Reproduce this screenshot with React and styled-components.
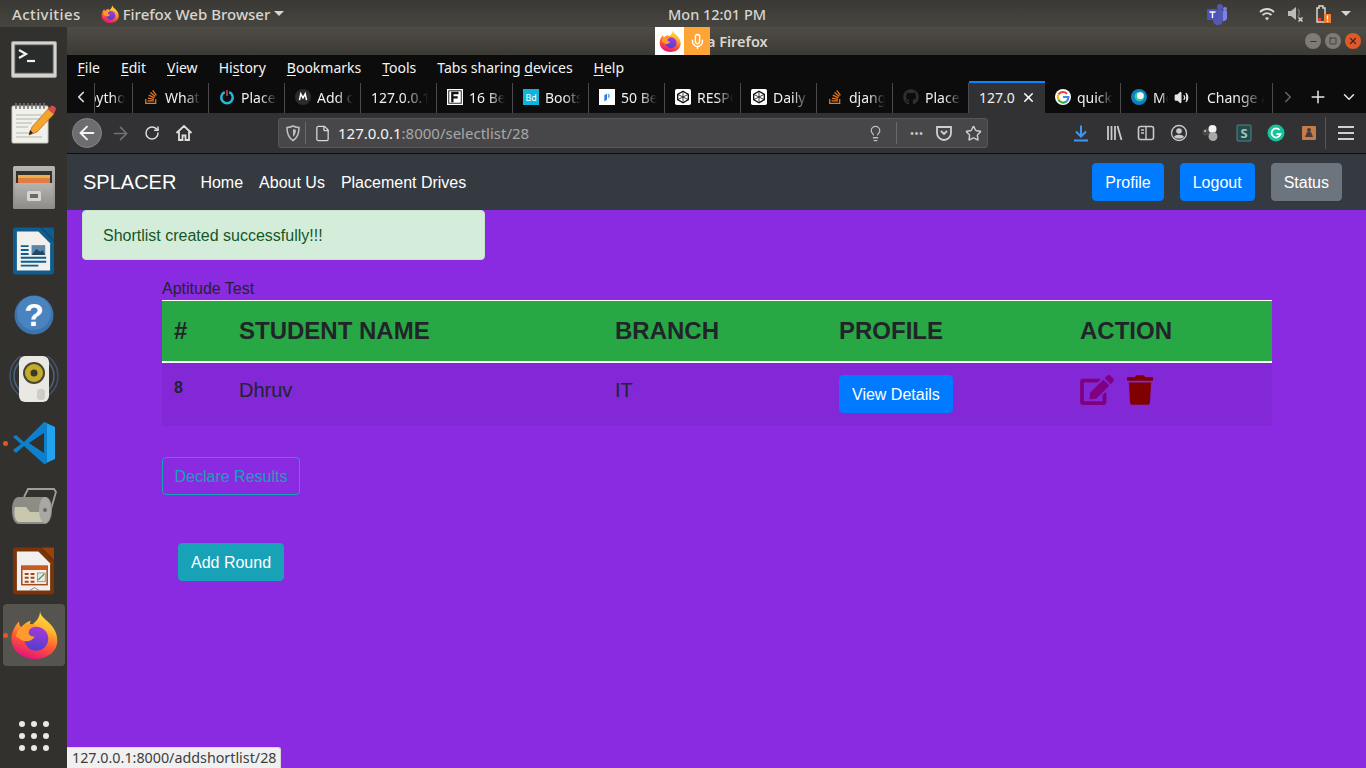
import React, { useId } from 'react';
import styled, { createGlobalStyle } from 'styled-components';
import { FaEdit, FaTrash, FaGithub, FaStackOverflow } from 'react-icons/fa';
import {
  ArrowLeft, ArrowRight, RotateCw, File, Lightbulb, Star,
  X, Plus, ChevronDown, ChevronLeft, ChevronRight, Volume2, Mic, Minus, Square,
} from 'lucide-react';

const GlobalStyle = createGlobalStyle`
  html, body {
    margin: 0;
    height: 100%;
    overflow: hidden;
    background: #8a2be2;
  }
  * { box-sizing: border-box; }
  #root { height: 768px; }
`;

const uiFont = `"Noto Sans", "DejaVu Sans", sans-serif`;
const pageFont = `"Liberation Sans", Arial, sans-serif`;

function FirefoxLogo({ size = 18 }) {
  const id = useId();
  return (
    <svg width={size} height={size} viewBox="0 0 64 64">
      <defs>
        <linearGradient id={`${id}a`} x1="0.75" y1="0" x2="0.4" y2="1">
          <stop offset="0" stopColor="#ffe83f" />
          <stop offset="0.35" stopColor="#ffb52e" />
          <stop offset="0.65" stopColor="#ff5a33" />
          <stop offset="1" stopColor="#e5137b" />
        </linearGradient>
        <linearGradient id={`${id}b`} x1="0.6" y1="0" x2="0.4" y2="1">
          <stop offset="0" stopColor="#a63bd6" />
          <stop offset="1" stopColor="#4f3fd0" />
        </linearGradient>
      </defs>
      <path
        fill={`url(#${id}a)`}
        d="M40 0c0 8 10 12 16 20 6 8 7 14 7 20 0 14-13 24-30 24C16 64 2 52 2 38c0-10 4-18 10-24 0 4 1 6 3 8 3-5 9-8 13-9-2 3-2 5 0 7 6-6 12-10 12-20z"
      />
      <circle cx="35" cy="37" r="16" fill={`url(#${id}b)`} />
      <path
        fill="#ff9a2e"
        d="M8 34c1-9 8-16 17-17 4 0 8 1 11 3-6 0-11 4-11 9 0 3 3 5 8 5-3 6-11 8-17 5-4-2-7-5-8-5z"
      />
    </svg>
  );
}

function TerminalIcon() {
  return (
    <svg width="46" height="37" viewBox="0 0 46 37">
      <rect x="0.500" y="0.500" width="45" height="36" rx="1.500" fill="#d3d3d0" stroke="#9a9a96" />
      <rect x="4" y="4" width="38" height="28" fill="#2a2b2b" stroke="#555" />
      <path d="M8 9l7 4-7 4" fill="none" stroke="#f2f2f2" strokeWidth="2.200" />
      <path d="M16 20h8" stroke="#f2f2f2" strokeWidth="2.200" />
    </svg>
  );
}

function NotepadIcon() {
  return (
    <svg width="46" height="42" viewBox="0 0 46 42">
      <rect x="1" y="4" width="36" height="37" rx="1" fill="#f1f1ec" stroke="#c9c9c2" />
      <path d="M5 1v6M9 1v6M13 1v6M17 1v6M21 1v6M25 1v6M29 1v6M33 1v6" stroke="#777" strokeWidth="1.600" />
      <path d="M5 13h26M5 17h24M5 21h16M5 25h12M5 31h16M5 35h26" stroke="#b5b5b0" strokeWidth="1.200" />
      <path d="M18 33l3-8L37 7l6 5-17 18z" fill="#f5a52f" stroke="#b56f18" strokeWidth="0.800" />
      <path d="M37 7l3-3c2-1 5 1 5 3l-2 5z" fill="#d94b4b" />
      <path d="M18 33l1-5 3 3z" fill="#222" />
    </svg>
  );
}

function CabinetIcon() {
  const id = useId();
  return (
    <svg width="42" height="43" viewBox="0 0 42 43">
      <defs>
        <linearGradient id={id} x1="0" y1="0" x2="0" y2="1">
          <stop offset="0" stopColor="#b5b4b1" />
          <stop offset="1" stopColor="#8d8c89" />
        </linearGradient>
      </defs>
      <rect x="0" y="0" width="42" height="43" rx="1.500" fill={`url(#${id})`} />
      <rect x="3" y="5" width="36" height="13" fill="#33322f" />
      <rect x="5" y="9" width="32" height="3" fill="#eab04a" />
      <rect x="5" y="12" width="32" height="6" fill="#e07c44" />
      <rect x="2" y="17" width="38" height="26" fill={`url(#${id})`} />
      <rect x="14" y="25" width="14" height="10" rx="1.500" fill="#d6d5d2" />
      <rect x="17" y="28" width="8" height="4" fill="#6a6966" />
    </svg>
  );
}

function OfficeIcon({ dark, fold, children }) {
  return (
    <svg width="41" height="48" viewBox="0 0 42 48">
      <path d="M2 0h26l14 14v31a3 3 0 0 1-3 3H3a3 3 0 0 1-3-3V2a2 2 0 0 1 2-2z" fill={dark} />
      <path d="M4 4h22l12 12v28H4z" fill="#f1f0ec" />
      <path d="M29 0h13v13z" fill={fold} />
      {children}
    </svg>
  );
}

function HelpIcon() {
  return (
    <svg width="40" height="40" viewBox="0 0 40 40">
      <circle cx="20" cy="20" r="19.500" fill="#3d74ae" />
      <circle cx="20" cy="18" r="17" fill="#4a84bf" />
      <text x="20" y="31" textAnchor="middle" fontFamily={pageFont} fontSize="32" fontWeight="700" fill="#fff">?</text>
    </svg>
  );
}

function SpeakerIcon() {
  return (
    <svg width="50" height="46" viewBox="0 0 50 46">
      <circle cx="25" cy="20" r="24" fill="none" stroke="#45566b" strokeWidth="1.500" />
      <circle cx="25" cy="20" r="20" fill="none" stroke="#4d6480" strokeWidth="1.500" />
      <rect x="10" y="0" width="30" height="46" rx="6" fill="#e9e8e3" />
      <circle cx="25" cy="17" r="11" fill="#4a4530" />
      <circle cx="25" cy="17" r="9" fill="#c2ac2a" />
      <circle cx="25" cy="17" r="3.500" fill="#3b3826" />
      <rect x="28" y="33" width="8" height="11" rx="3" fill="#cfcdc6" />
    </svg>
  );
}

function VsCodeIcon() {
  return (
    <svg width="42" height="42" viewBox="0 0 42 42">
      <path d="M31 0l11 5v32l-11 5z" fill="#23a2f0" />
      <path d="M31 0L11 20 3 13 0 15l8 7-8 6 3 3 8-7 20 18 3-1V2z" fill="#0d7fcb" />
      <path d="M31 11L16 21l15 10z" fill="#32302c" />
    </svg>
  );
}

function RollerIcon() {
  return (
    <svg width="46" height="38" viewBox="0 0 46 38">
      <path d="M13 9l4-8h26l2 3-7 24" fill="none" stroke="#a09f9a" strokeWidth="1.800" />
      <path d="M8 9h26c5 0 7 6 7 13s-3 14-7 14H8C3 36 1 29 1 22S3 9 8 9z" fill="#8e8d85" />
      <path d="M4 19h11l4 5h17v10H8c-3 0-6-6-4-15z" fill="#c9c8ae" />
      <ellipse cx="34" cy="22" rx="6" ry="13" fill="#a9a8a4" />
      <circle cx="34" cy="22" r="2" fill="#666" />
    </svg>
  );
}

function BarIcon({ children, w = 18, h = 18, vb = '0 0 18 18' }) {
  return <svg width={w} height={h} viewBox={vb}>{children}</svg>;
}

function Favicon({ children }) {
  return <BarIcon w={16} h={16}>{children}</BarIcon>;
}

const teams = (
  <BarIcon w={22} h={22} vb="0 0 22 22">
    <circle cx="14" cy="4" r="3" fill="#5558af" />
    <circle cx="19" cy="6" r="2" fill="#7b83eb" />
    <path d="M16 8h5v7c0 2-2 3-3 3h-2z" fill="#7b83eb" />
    <path d="M7 7h10v10c0 3-2 5-5 5s-5-2-5-5z" fill="#5558af" />
    <rect x="1" y="6" width="11" height="11" rx="1" fill="#4b53bc" />
    <path d="M3.500 9h6M6.500 9v6" stroke="#fff" strokeWidth="1.400" />
  </BarIcon>
);

const wifi = (
  <BarIcon>
    <path d="M2 7c4-4 10-4 14 0M4.500 10c3-2.500 6-2.500 9 0" fill="none" stroke="#d8d7d1" strokeWidth="1.800" />
    <path d="M7 13c1.300-1 2.700-1 4 0l-2 2.500z" fill="#d8d7d1" />
  </BarIcon>
);

const sound = (
  <BarIcon>
    <path d="M2 6h3l5-4v13l-5-4H2z" fill="#bdbcb6" />
    <path d="M12 4c1.500 2 1.500 5 0 8" fill="none" stroke="#77766f" strokeWidth="1.400" />
    <path d="M12.500 12.500l4 4m0-4l-4 4" stroke="#d8d7d1" strokeWidth="1.500" />
  </BarIcon>
);

const battery = (
  <BarIcon w={16} h={20} vb="0 0 16 20">
    <path d="M2 4h2V2h4v2h2v14H2z" fill="none" stroke="#d8d7d1" strokeWidth="1.500" />
    <rect x="3" y="14" width="3" height="3" fill="#d8412e" />
    <rect x="9" y="10" width="7" height="9" fill="#ef7b30" />
    <path d="M12.500 11.500v4M12.500 16.500v1.500" stroke="#fff" strokeWidth="1.300" />
  </BarIcon>
);

const stackIcon = <FaStackOverflow size={16} color="#e87922" />;

const favicons = {
  place: (
    <Favicon>
      <path d="M6.500 3.500a6.500 6.500 0 1 0 5 0" fill="none" stroke="#27b6d8" strokeWidth="2.800" />
      <path d="M9 1v7" stroke="#e8435b" strokeWidth="1.600" />
    </Favicon>
  ),
  medium: (
    <Favicon>
      <circle cx="9" cy="9" r="9" fill="#2b2b2b" />
      <path d="M5 12.500l1.500-7L9 10l2.500-4.500 1.500 7" fill="none" stroke="#fff" strokeWidth="1.700" />
    </Favicon>
  ),
  fonts: (
    <Favicon>
      <rect width="18" height="18" fill="#fff" />
      <rect x="2" y="2" width="14" height="14" fill="none" stroke="#111" strokeWidth="1" />
      <path d="M6 15V4.500h7M6 9.500h6" fill="none" stroke="#111" strokeWidth="2.600" />
    </Favicon>
  ),
  boot: (
    <Favicon>
      <rect width="18" height="18" fill="#0fb4dc" />
      <text x="9" y="13" textAnchor="middle" fontFamily={uiFont} fontSize="10" fill="#fff">Bd</text>
    </Favicon>
  ),
  best: (
    <Favicon>
      <rect width="18" height="18" fill="#fff" />
      <path d="M6 14V7l3-2v7z" fill="#2f7de1" />
      <path d="M10 5c3 .500 3 5 0 5.500z" fill="#5bb3ef" />
    </Favicon>
  ),
  resp: (
    <Favicon>
      <rect width="18" height="18" rx="2" fill="#fff" />
      <path d="M9 2.500L15 6v6l-6 3.500L3 12V6z" fill="none" stroke="#111" strokeWidth="1.500" />
      <path d="M9 2.500V15.500M3 6l12 6M15 6L3 12" stroke="#111" strokeWidth="0.900" />
    </Favicon>
  ),
  google: (
    <Favicon>
      <circle cx="9" cy="9" r="9" fill="#fff" />
      <path d="M13.500 5.500A6 6 0 0 0 4 6" fill="none" stroke="#ea4335" strokeWidth="2.400" />
      <path d="M4 6a6 6 0 0 0 0 6" fill="none" stroke="#fbbc05" strokeWidth="2.400" />
      <path d="M4 12a6 6 0 0 0 9 2" fill="none" stroke="#34a853" strokeWidth="2.400" />
      <path d="M13 14c1.500-1 2-3 2-5H9" fill="none" stroke="#4285f4" strokeWidth="2.400" />
    </Favicon>
  ),
  meet: (
    <Favicon>
      <circle cx="9" cy="9" r="9" fill="#0e7fc0" />
      <circle cx="9.500" cy="8.500" r="5.500" fill="#34c9a8" />
      <circle cx="10.500" cy="7.500" r="3.800" fill="#f1f5f1" />
    </Favicon>
  ),
};

const tabs = [
  { title: 'pytho', width: 39, clip: true },
  { title: 'What is', icon: stackIcon },
  { title: 'Placement', icon: favicons.place },
  { title: 'Add or', icon: favicons.medium },
  { title: '127.0.0.1' },
  { title: '16 Best', icon: favicons.fonts },
  { title: 'Bootstrap', icon: favicons.boot },
  { title: '50 Best', icon: favicons.best },
  { title: 'RESPONSIVE', icon: favicons.resp },
  { title: 'Daily', icon: favicons.resp },
  { title: 'django', icon: stackIcon },
  { title: 'Placement', icon: <FaGithub size={16} color="#2f2f33" /> },
  { title: '127.0', active: true },
  { title: 'quick', icon: favicons.google },
  { title: 'Meet', icon: favicons.meet, audio: true },
  { title: 'Change a' },
];

const dockItems = [
  { icon: <TerminalIcon /> },
  { icon: <NotepadIcon /> },
  { icon: <CabinetIcon /> },
  {
    icon: (
      <OfficeIcon dark="#0f5c8e" fold="#0f5c8e">
        <rect x="19" y="18" width="14" height="10" fill="#5c87a8" />
        <path d="M19 28l5-6 4 3 2-2 3 5z" fill="#26455e" />
        <path d="M8 19h8M8 23h8M8 27h8M8 31h26M8 35h26M8 39h18" stroke="#0f5c8e" strokeWidth="2" />
      </OfficeIcon>
    ),
  },
  { icon: <HelpIcon /> },
  { icon: <SpeakerIcon /> },
  { icon: <VsCodeIcon />, running: true },
  { icon: <RollerIcon /> },
  {
    icon: (
      <OfficeIcon dark="#7a3408" fold="#9a4109">
        <rect x="9" y="19" width="26" height="19" fill="#f6f1ea" stroke="#a4481a" strokeWidth="1.500" />
        <rect x="9" y="19" width="26" height="4" fill="#c85b24" />
        <path d="M12 27h4M12 31h4M12 35h4M18 27h4M18 31h4M18 35h4" stroke="#a4481a" strokeWidth="2" />
        <rect x="25" y="26" width="8" height="9" fill="#e9e9e6" stroke="#777" strokeWidth="0.700" />
        <path d="M26 33l3-3 3-3" fill="none" stroke="#3aa03a" strokeWidth="1.300" />
        <path d="M17 44l5-3 5 3" fill="none" stroke="#888" />
      </OfficeIcon>
    ),
  },
  { icon: <FirefoxLogo size={48} />, running: true, active: true },
];

export default function App() {
  return (
    <>
      <GlobalStyle />
      <Desktop>
        <TopBar>
          <TopLeft>
            <Activities>Activities</Activities>
            <AppMenu>
              <FirefoxLogo size={18} />
              <span>Firefox Web Browser</span>
              <Caret />
            </AppMenu>
          </TopLeft>
          <Clock>Mon 12:01 PM</Clock>
          <TopRight>
            <TrayCell $w={72}>{teams}</TrayCell>
            <TrayCell $w={28}>{wifi}</TrayCell>
            <TrayCell $w={28}>{sound}</TrayCell>
            <TrayCell $w={28}>{battery}</TrayCell>
            <TrayCell $w={18}><Caret /></TrayCell>
          </TopRight>
        </TopBar>
        <Body>
          <Dock>
            {dockItems.map((item, i) => (
              <DockItem key={i} $active={item.active}>
                {item.running && <RunDot />}
                {item.icon}
              </DockItem>
            ))}
            <AppGrid>
              {Array.from({ length: 9 }).map((_, i) => <AppDot key={i} />)}
            </AppGrid>
          </Dock>
          <Browser>
            <TitleBar>
              Mozilla Firefox
              <ShareBadge>
                <ShareLogo><FirefoxLogo size={22} /></ShareLogo>
                <ShareMic><Mic size={17} color="#fff" strokeWidth={2} /></ShareMic>
              </ShareBadge>
              <WindowButtons>
                <WinBtn><Minus size={9} strokeWidth={3} color="#35342f" /></WinBtn>
                <WinBtn><Square size={8} strokeWidth={2.500} color="#35342f" /></WinBtn>
                <WinBtn $close><X size={10} strokeWidth={3} color="#4c2312" /></WinBtn>
              </WindowButtons>
            </TitleBar>
            <MenuBar>
              <li><u>F</u>ile</li>
              <li><u>E</u>dit</li>
              <li><u>V</u>iew</li>
              <li>Hi<u>s</u>tory</li>
              <li><u>B</u>ookmarks</li>
              <li><u>T</u>ools</li>
              <li>Tabs sharing <u>d</u>evices</li>
              <li><u>H</u>elp</li>
            </MenuBar>
            <TabStrip>
              <StripButton $w={27}><ChevronLeft size={18} color="#e6e6e6" strokeWidth={2.200} /></StripButton>
              {tabs.map((tab, i) => (
                <Tab key={i} $active={tab.active} $w={tab.width} $clip={tab.clip}>
                  {tab.icon}
                  <TabTitle $active={tab.active} $clip={tab.clip}>{tab.title}</TabTitle>
                  {tab.audio && <Volume2 size={15} color="#e6e6e6" fill="#e6e6e6" />}
                  {tab.active && <X size={15} color="#fff" strokeWidth={2.400} />}
                </Tab>
              ))}
              <StripButton $w={30}><ChevronRight size={18} color="#66666a" strokeWidth={2} /></StripButton>
              <StripButton $w={30}><Plus size={20} color="#e6e6e6" strokeWidth={1.800} /></StripButton>
              <StripButton $w={32}><ChevronDown size={18} color="#e6e6e6" strokeWidth={2} /></StripButton>
            </TabStrip>
            <Toolbar>
              <BackButton><ArrowLeft size={22} color="#f4f4f4" strokeWidth={2} /></BackButton>
              <ToolButton $w={32}><ArrowRight size={21} color="#727274" strokeWidth={1.800} /></ToolButton>
              <ToolButton $w={32}><RotateCw size={16} color="#dedede" strokeWidth={2.200} /></ToolButton>
              <ToolButton $w={32}>
                <BarIcon>
                  <path d="M1.500 9L9 2l7.500 7M4 7.500V16h3.500v-4.500h3V16H14V7.500" fill="none" stroke="#dedede" strokeWidth="1.800" />
                </BarIcon>
              </ToolButton>
              <UrlBar>
                <UrlSlot $w={20}>
                  <BarIcon>
                    <path d="M9 2c2 1 4 1.500 6 1.500 0 6-1 10-6 13-5-3-6-7-6-13C5 3.500 7 3 9 2z" fill="none" stroke="#bdbdbe" strokeWidth="1.600" />
                    <path d="M9 5c1 .500 2 .700 3 .700 0 3-1 5.500-3 7z" fill="#bdbdbe" />
                  </BarIcon>
                </UrlSlot>
                <UrlDivider $m={2} />
                <UrlSlot $w={28}><File size={17} color="#d8d8d8" strokeWidth={1.800} /></UrlSlot>
                <UrlText><b>127.0.0.1</b>:8000/selectlist/28</UrlText>
                <UrlSlot $w={24}><Lightbulb size={17} color="#bdbdbe" strokeWidth={1.800} /></UrlSlot>
                <UrlDivider $m={9} />
                <UrlSlot $w={22}><UrlDots>•••</UrlDots></UrlSlot>
                <UrlSlot $w={32}>
                  <BarIcon>
                    <path d="M2 3h14v6a7 7 0 0 1-14 0z" fill="none" stroke="#cfcfcf" strokeWidth="1.800" />
                    <path d="M6 7l3 3 3-3" fill="none" stroke="#cfcfcf" strokeWidth="1.800" />
                  </BarIcon>
                </UrlSlot>
                <UrlSlot $w={26}><Star size={17} color="#cfcfcf" strokeWidth={2} /></UrlSlot>
              </UrlBar>
              <RightTools>
                <ToolButton>
                  <BarIcon>
                    <path d="M9 1.500V12M4 7.500L9 12.500l5-5M2 16.500h14" fill="none" stroke="#3d97f5" strokeWidth="2" />
                  </BarIcon>
                </ToolButton>
                <ToolButton>
                  <BarIcon>
                    <path d="M3 2v14M6.500 2v14M10 2v14M12.500 2l4 14" stroke="#c9c9ca" strokeWidth="1.800" fill="none" />
                  </BarIcon>
                </ToolButton>
                <ToolButton>
                  <BarIcon>
                    <rect x="1.500" y="2.500" width="15" height="13" rx="2" fill="none" stroke="#c9c9ca" strokeWidth="1.600" />
                    <path d="M9 3v12M4 6h3M4 9h3" stroke="#c9c9ca" strokeWidth="1.400" />
                  </BarIcon>
                </ToolButton>
                <ToolButton>
                  <BarIcon>
                    <circle cx="9" cy="9" r="7.500" fill="none" stroke="#c9c9ca" strokeWidth="1.300" />
                    <circle cx="9" cy="7" r="2.800" fill="#c9c9ca" />
                    <path d="M4 13c1-3 9-3 10 0-2 2-8 2-10 0z" fill="#c9c9ca" />
                  </BarIcon>
                </ToolButton>
                <ToolButton>
                  <BarIcon>
                    <circle cx="4" cy="8" r="3.600" fill="#4a4a4a" />
                    <circle cx="3.200" cy="7" r="1" fill="#cfcfcf" />
                    <circle cx="10.500" cy="5" r="4" fill="#f2f2f2" />
                    <circle cx="11" cy="12.500" r="4.500" fill="#a8a8a8" />
                  </BarIcon>
                </ToolButton>
                <ToolButton>
                  <BarIcon>
                    <rect x="2" y="1" width="14" height="16" rx="1" fill="#264b4c" stroke="#4f8788" />
                    <text x="9" y="14" textAnchor="middle" fontFamily={uiFont} fontSize="13" fontWeight="700" fill="#9cc6c4">S</text>
                  </BarIcon>
                </ToolButton>
                <ToolButton>
                  <BarIcon>
                    <circle cx="9" cy="9" r="8.500" fill="#15c39a" />
                    <path d="M12.500 6a4.500 4.500 0 1 0 1 4H9.500" fill="none" stroke="#fff" strokeWidth="1.800" />
                  </BarIcon>
                </ToolButton>
                <ToolButton>
                  <BarIcon>
                    <rect x="2" y="2" width="14" height="14" rx="1" fill="#c67b4a" />
                    <path d="M5 13l2-5h4l2 5z" fill="#4b3a33" />
                    <circle cx="9" cy="6" r="2" fill="#4b3a33" />
                  </BarIcon>
                </ToolButton>
                <ToolDivider />
                <Hamburger />
              </RightTools>
            </Toolbar>
            <Page>
              <NavBar>
                <Brand>SPLACER</Brand>
                <NavLinks>
                  <a>Home</a>
                  <a>About Us</a>
                  <a>Placement Drives</a>
                </NavLinks>
                <NavActions>
                  <Btn $bg="#007bff">Profile</Btn>
                  <Btn $bg="#007bff">Logout</Btn>
                  <Btn $bg="#6c757d">Status</Btn>
                </NavActions>
              </NavBar>
              <Alert>Shortlist created successfully!!!</Alert>
              <Container>
                <RoundLabel>Aptitude Test</RoundLabel>
                <Table>
                  <colgroup>
                    <col width="65" />
                    <col width="376" />
                    <col width="224" />
                    <col width="241" />
                    <col width="204" />
                  </colgroup>
                  <thead>
                    <tr>
                      <th>#</th>
                      <th>STUDENT NAME</th>
                      <th>BRANCH</th>
                      <th>PROFILE</th>
                      <th>ACTION</th>
                    </tr>
                  </thead>
                  <tbody>
                    <tr>
                      <RowNum>8</RowNum>
                      <td>Dhruv</td>
                      <td>IT</td>
                      <td><Btn $bg="#007bff">View Details</Btn></td>
                      <td>
                        <Actions>
                          <EditIcon />
                          <TrashIcon />
                        </Actions>
                      </td>
                    </tr>
                  </tbody>
                </Table>
                <OutlineBtn>Declare Results</OutlineBtn>
                <AddRound $bg="#17a2b8">Add Round</AddRound>
              </Container>
              <StatusTip>127.0.0.1:8000/addshortlist/28</StatusTip>
            </Page>
          </Browser>
        </Body>
      </Desktop>
    </>
  );
}

const Desktop = styled.div`
  display: flex;
  flex-direction: column;
  width: 1366px;
  height: 768px;
  overflow: hidden;
`;

const TopBar = styled.header`
  display: flex;
  align-items: center;
  height: 27px;
  flex: none;
  background: linear-gradient(#3a3935, #47453f);
  color: #d6d5cf;
  font: 500 15px ${uiFont};
`;

const TopLeft = styled.div`
  display: flex;
  align-items: center;
  width: 668px;
  padding-left: 12px;
`;

const Activities = styled.span`
  letter-spacing: 0.4px;
`;

const Clock = styled.span`
  font-size: 14.500px;
`;

const AppMenu = styled.div`
  display: flex;
  align-items: center;
  gap: 4px;
  margin-left: 20px;
`;

const Caret = styled.i`
  display: inline-block;
  width: 0;
  height: 0;
  border-left: 5px solid transparent;
  border-right: 5px solid transparent;
  border-top: 5px solid #d6d5cf;
`;

const TopRight = styled.div`
  display: flex;
  align-items: center;
  margin-left: auto;
  padding-right: 11px;
`;

const TrayCell = styled.div`
  display: flex;
  justify-content: center;
  width: ${(p) => p.$w}px;
`;

const Body = styled.div`
  display: flex;
  flex: 1;
  min-height: 0;
`;

const Dock = styled.nav`
  display: flex;
  flex-direction: column;
  align-items: center;
  gap: 2px;
  width: 67px;
  flex: none;
  padding-top: 1px;
  background: #32312d;
`;

const DockItem = styled.div`
  position: relative;
  display: flex;
  align-items: center;
  justify-content: center;
  width: 62px;
  height: 62px;
  flex: none;
  border-radius: 4px;
  background: ${(p) => (p.$active ? '#56544f' : 'transparent')};
`;

const RunDot = styled.i`
  position: absolute;
  left: 0;
  top: 29px;
  width: 5px;
  height: 5px;
  border-radius: 50%;
  background: #e95420;
`;

const AppGrid = styled.div`
  display: grid;
  grid-template-columns: repeat(3, 6px);
  gap: 6px;
  margin-top: auto;
  margin-bottom: 17px;
`;

const AppDot = styled.i`
  width: 6px;
  height: 6px;
  border-radius: 50%;
  background: #e8e8e6;
`;

const Browser = styled.main`
  display: flex;
  flex-direction: column;
  flex: 1;
  min-width: 0;
`;

const TitleBar = styled.div`
  position: relative;
  display: flex;
  align-items: center;
  justify-content: center;
  height: 28px;
  flex: none;
  background: linear-gradient(#4f4c45, #3c3a35);
  color: #d8d7d1;
  font: 600 14.500px ${uiFont};
`;

const ShareBadge = styled.div`
  position: absolute;
  left: 588px;
  top: 0;
  display: flex;
  height: 28px;
`;

const ShareLogo = styled.div`
  display: flex;
  align-items: center;
  justify-content: center;
  width: 29px;
  background: #fff;
`;

const ShareMic = styled.div`
  display: flex;
  align-items: center;
  justify-content: center;
  width: 26px;
  background: #ffa436;
`;

const WindowButtons = styled.div`
  position: absolute;
  right: 5px;
  top: 6px;
  display: flex;
  gap: 4px;
`;

const WinBtn = styled.div`
  display: flex;
  align-items: center;
  justify-content: center;
  width: 16px;
  height: 16px;
  border-radius: 50%;
  background: ${(p) => (p.$close ? '#e0592a' : '#7d7b74')};
`;

const MenuBar = styled.ul`
  display: flex;
  gap: 21px;
  height: 26px;
  flex: none;
  margin: 0;
  padding: 0 0 2px 10.500px;
  list-style: none;
  align-items: center;
  background: #0c0c0d;
  color: #f4f4f4;
  font: 14px ${uiFont};
  u { text-underline-offset: 2px; }
`;

const TabStrip = styled.div`
  display: flex;
  height: 32px;
  flex: none;
  background: #0c0c0d;
`;

const StripButton = styled.div`
  display: flex;
  align-items: center;
  justify-content: center;
  width: ${(p) => p.$w}px;
  flex: none;
`;

const Tab = styled.div`
  display: flex;
  align-items: center;
  justify-content: ${(p) => (p.$clip ? 'flex-end' : 'flex-start')};
  gap: 6px;
  width: ${(p) => p.$w || 76}px;
  flex: none;
  padding: 0 ${(p) => (p.$active ? 9 : 8)}px 2px ${(p) => (p.$clip ? 2 : 10)}px;
  background: ${(p) => (p.$active ? '#323234' : 'transparent')};
  border-top: 2px solid ${(p) => (p.$active ? '#0a84ff' : 'transparent')};
  box-shadow: ${(p) => {
    if (p.$active) return 'none';
    return p.$clip ? 'inset -1px 0 0 #4a4a4f, inset 1px 0 0 #4a4a4f' : 'inset -1px 0 0 #4a4a4f';
  }};
  color: #f0f0f0;
  font: 14px ${uiFont};
  overflow: hidden;
`;

const TabTitle = styled.span`
  flex: ${(p) => (p.$clip ? 'none' : 1)};
  min-width: 0;
  overflow: hidden;
  white-space: nowrap;
  ${(p) => (p.$clip ? 'width: 30px; text-indent: -7px;' : '')}
  ${(p) => (p.$active ? '' : 'mask-image: linear-gradient(90deg, #000 55%, transparent 100%);')}
`;

const Toolbar = styled.div`
  display: flex;
  align-items: center;
  height: 41px;
  flex: none;
  padding-left: 5px;
  background: #323234;
  border-bottom: 1px solid #0c0c0d;
`;

const BackButton = styled.div`
  display: flex;
  align-items: center;
  justify-content: center;
  width: 30px;
  height: 30px;
  margin-right: 2px;
  border-radius: 50%;
  background: #6d6d6f;
  border: 1px solid #868688;
`;

const ToolButton = styled.div`
  display: flex;
  align-items: center;
  justify-content: center;
  width: ${(p) => p.$w || 32.5}px;
  height: 32px;
  flex: none;
`;

const UrlBar = styled.div`
  display: flex;
  align-items: center;
  width: 710px;
  height: 30px;
  margin-left: 78px;
  padding: 0 1px 0 4px;
  border-radius: 3px;
  background: #474749;
  border: 1px solid #57575a;
`;

const UrlSlot = styled.div`
  display: flex;
  align-items: center;
  justify-content: center;
  width: ${(p) => p.$w}px;
  flex: none;
`;

const UrlDivider = styled.i`
  width: 1px;
  height: 22px;
  flex: none;
  margin: 0 ${(p) => p.$m}px;
  background: #69696c;
`;

const UrlText = styled.div`
  flex: 1;
  margin-left: 2px;
  color: #a8a8a9;
  font: 15px ${uiFont};
  b { color: #f4f4f4; font-weight: 400; }
`;

const UrlDots = styled.span`
  color: #c9c9ca;
  font: 10px ${pageFont};
  letter-spacing: 1px;
`;

const RightTools = styled.div`
  display: flex;
  align-items: center;
  margin-left: 77px;
`;

const ToolDivider = styled.i`
  width: 1px;
  height: 32px;
  background: #56565a;
`;

const Hamburger = styled.i`
  width: 16px;
  height: 14px;
  margin-left: 12px;
  border-top: 2px solid #d0d0d0;
  border-bottom: 2px solid #d0d0d0;
  background: linear-gradient(#d0d0d0, #d0d0d0) center / 100% 2px no-repeat;
`;

const Page = styled.div`
  position: relative;
  flex: 1;
  min-height: 0;
  background: #8a2be2;
  font: 16px/24px ${pageFont};
  color: #212529;
`;

const NavBar = styled.div`
  display: flex;
  align-items: center;
  height: 56px;
  padding: 0 24px 0 16px;
  background: #343a40;
`;

const Brand = styled.span`
  margin-right: 24px;
  color: #fff;
  font-size: 20px;
`;

const NavLinks = styled.div`
  display: flex;
  gap: 16px;
  padding-top: 1px;
  color: #fff;
`;

const NavActions = styled.div`
  display: flex;
  gap: 16px;
  margin-left: auto;
`;

const Btn = styled.button`
  display: inline-block;
  height: 38px;
  padding: 2px 12px 0;
  border: 1px solid ${(p) => p.$bg};
  border-radius: 4px;
  background: ${(p) => p.$bg};
  color: #fff;
  font: 16px/24px ${pageFont};
`;

const Alert = styled.div`
  width: 403px;
  height: 50px;
  margin-left: 15px;
  padding: 13px 20px;
  border: 1px solid #c3e6cb;
  border-radius: 4px;
  background: #d4edda;
  color: #155724;
`;

const Container = styled.div`
  display: flex;
  flex-direction: column;
  align-items: flex-start;
  width: 1110px;
  margin: 16px 0 0 95px;
`;

const RoundLabel = styled.div`
  height: 24px;
  padding-top: 1px;
`;

const Table = styled.table`
  width: 1110px;
  table-layout: fixed;
  border-collapse: collapse;
  font-size: 20px;

  th {
    height: 61px;
    padding: 12px;
    border-top: 1px solid #fff;
    border-bottom: 2px solid #fff;
    background: #28a745;
    font-size: 24px;
    line-height: 36px;
    text-align: left;
  }

  td {
    height: 64px;
    padding: 12px;
    vertical-align: top;
    background: rgba(0, 0, 0, 0.05);
    line-height: 30px;
  }
`;

const RowNum = styled.td`
  font-size: 16px;
  font-weight: 700;
  && { line-height: 26px; }
`;

const Actions = styled.div`
  display: flex;
  gap: 13px;
`;

const EditIcon = styled(FaEdit)`
  width: 34px;
  height: 30px;
  color: #800080;
`;

const TrashIcon = styled(FaTrash)`
  width: 26px;
  height: 30px;
  color: #800000;
`;

const OutlineBtn = styled.button`
  height: 38px;
  margin-top: 31px;
  padding: 2px 11.500px 0;
  border: 1px solid #17a2b8;
  border-radius: 4px;
  background: transparent;
  color: #17a2b8;
  font: 16px/24px ${pageFont};
`;

const AddRound = styled(Btn)`
  margin: 48px 0 0 16px;
`;

const StatusTip = styled.div`
  position: absolute;
  left: 0;
  bottom: 0;
  width: 214px;
  height: 21px;
  padding-left: 5px;
  border-top: 1px solid #d8d8d8;
  border-right: 1px solid #d8d8d8;
  border-top-right-radius: 3px;
  background: #f0f0f0;
  color: #3d3d3d;
  font: 14.300px/20px ${uiFont};
  white-space: nowrap;
`;
